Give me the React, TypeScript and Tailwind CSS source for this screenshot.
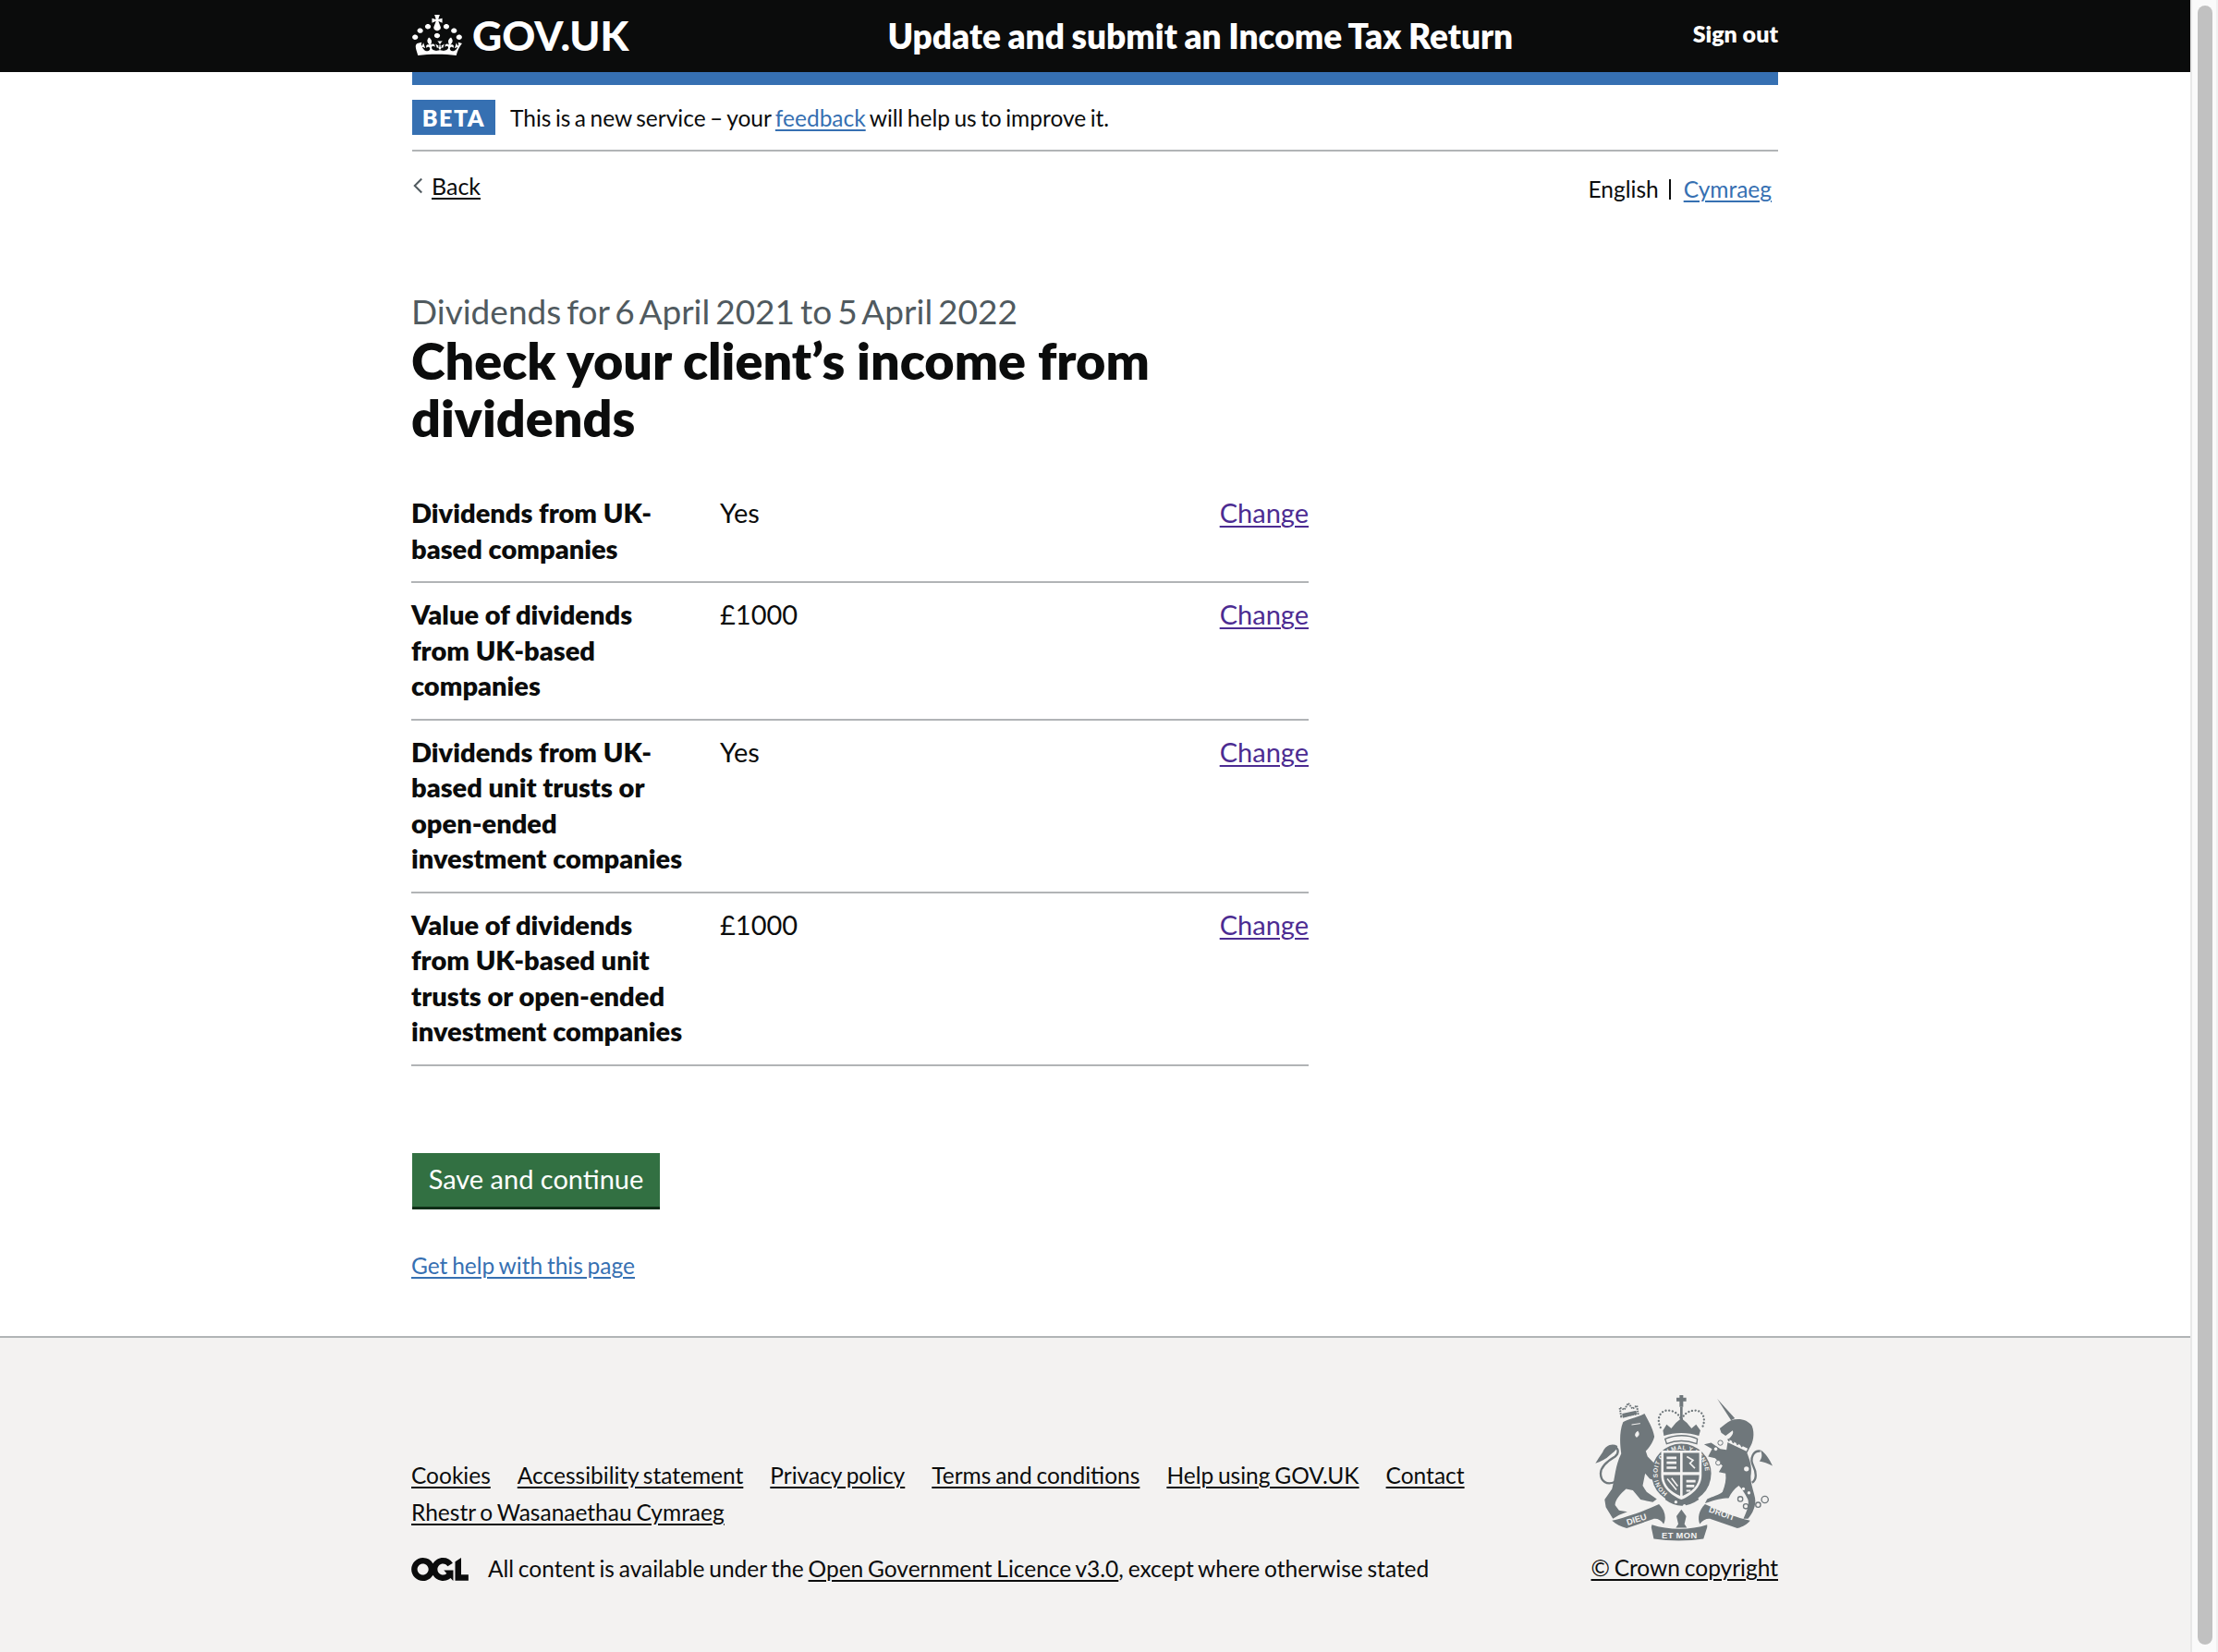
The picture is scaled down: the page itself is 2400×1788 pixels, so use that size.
import React from 'react';

const crownPath =
  'M22.6 10.4c-1 .4-2-.1-2.4-1-.4-.9.1-2 1-2.4.9-.4 2 .1 2.4 1s-.1 2-1 2.4m-5.9 6.7c-.9.4-2-.1-2.4-1-.4-.9.1-2 1-2.4.9-.4 2 .1 2.4 1s-.1 2-1 2.4m10.8-3.7c-1 .4-2-.1-2.4-1-.4-.9.1-2 1-2.4.9-.4 2 .1 2.4 1s0 2-1 2.4m3.3 4.8c-1 .4-2-.1-2.4-1-.4-.9.1-2 1-2.4.9-.4 2 .1 2.4 1s-.1 2-1 2.4M17 4.7l2.3 1.2V2.5l-2.3.7-.2-.2.9-3h-3.4l.9 3-.2.2c-.1.1-2.3-.7-2.3-.7v3.4L15 4.7c.1.1.1.2.2.2l-1.3 4c-.1.2-.1.4-.1.6 0 1.1.8 2 1.9 2.2h.7c1-.2 1.9-1.1 1.9-2.2 0-.2 0-.4-.1-.6l-1.3-4c-.1-.1.1-.2.1-.2m-7.6 5.7c.9.4 2-.1 2.4-1 .4-.9-.1-2-1-2.4-.9-.4-2 .1-2.4 1s0 2 1 2.4m-5 3c.9.4 2-.1 2.4-1 .4-.9-.1-2-1-2.4-.9-.4-2 .1-2.4 1s.1 2 1 2.4m-3.2 4.8c.9.4 2-.1 2.4-1 .4-1-.1-2-1-2.4-.9-.4-2 .1-2.4 1-.4 1 .1 2 1 2.4m14.8 11c4.4 0 8.6.3 12.3.8 1.1-4.5 2.4-7 3.7-8.8l-2.5-.9c.2 1.3.3 1.9 0 2.7-.4-.4-.8-1.1-1.1-2.3l-1.2 4c.7-.5 1.3-.8 2-.9-1.1 2.5-2.6 3.1-3.5 3-1.1-.2-1.7-1.2-1.5-2.1.3-1.2 1.5-1.5 2.1-.1 1.1-2.3-.8-3-2-2.3 1.9-1.9 2.1-3.5.6-5.6-2.1 1.6-2.1 3.2-1.2 5.5-1.2-1.4-3.2-.6-2.5 1.6.9-1.4 2.1-.5 1.9.8-.2 1.1-1.7 2.1-3.5 1.9-2.7-.2-2.9-2.1-2.9-3.6.7-.1 1.9.5 2.9 1.9l1-3.4c-1.1 1.2-2.2 1.4-3.3 1.4.4-1.2 2.1-3.4 2.1-3.4h-3.2s1.7 2.2 2.1 3.4c-1.1 0-2.2-.2-3.3-1.4l1 3.4c1-1.4 2.2-2 2.9-1.9 0 1.5-.2 3.4-2.9 3.6-1.9.2-3.4-.8-3.5-1.9-.2-1.3 1-2.2 1.9-.8.7-2.3-1.2-3-2.5-1.6.9-2.2.9-3.9-1.2-5.5-1.5 2-1.3 3.7.6 5.6-1.2-.7-3.1 0-2 2.3.6-1.4 1.8-1.1 2.1.1.2.9-.3 1.9-1.5 2.1-.9.2-2.4-.5-3.5-3 .6 0 1.2.3 2 .9l-1.2-4c-.3 1.1-.7 1.9-1.1 2.3-.3-.8-.2-1.4 0-2.7l-2.9.9C1.3 23 2.6 25.5 3.7 30c3.7-.5 7.9-.8 12.3-.8';

const oglPath =
  'M421.5 142.8V.1l-50.7 32.3v161.1h112.4v-50.7zm-122.3-9.6A47.12 47.12 0 0 1 221 97.8c0-26 21.1-47.1 47.1-47.1 16.7 0 31.4 8.7 39.7 21.8l42.7-27.2A97.63 97.63 0 0 0 268.1 0c-36.5 0-68.3 20.1-85.1 49.7A98 98 0 0 0 97.8 0C43.9 0 0 43.9 0 97.8s43.9 97.8 97.8 97.8c36.5 0 68.3-20.1 85.1-49.7a97.76 97.76 0 0 0 149.6 25.4l19.4 22.2h3v-87.8h-80l24.3 27.5zM97.8 145c-26 0-47.1-21.1-47.1-47.1s21.1-47.1 47.1-47.1 47.2 21 47.2 47S123.8 145 97.8 145';

const rows = [
  { key: ['Dividends from UK-', 'based companies'], value: 'Yes' },
  { key: ['Value of dividends', 'from UK-based', 'companies'], value: '£1000' },
  { key: ['Dividends from UK-', 'based unit trusts or', 'open-ended', 'investment companies'], value: 'Yes' },
  { key: ['Value of dividends', 'from UK-based unit', 'trusts or open-ended', 'investment companies'], value: '£1000' },
];

const footerLinks = [
  'Cookies',
  'Accessibility statement',
  'Privacy policy',
  'Terms and conditions',
  'Help using GOV.UK',
  'Contact',
  'Rhestr o Wasanaethau Cymraeg',
];

const Crest = () => (
  <svg viewBox="197 90 578 475" className="w-[192px] h-[158px] mr-[6px] text-[#6f777b]" fill="currentColor">
    {/* lion */}
    <path d="M288 178C300 168 330 165 358 150C368 170 385 195 390 225C385 245 372 262 362 272L368 290L400 322L408 345L392 368L375 362L360 345L352 385L365 405L398 428L385 438L365 434L345 430L320 400L298 395C280 410 262 430 262 448L275 465L302 470L275 480L255 492L232 455L228 430L252 395C262 360 262 320 282 280C278 250 275 210 288 178Z" />
    <path d="M316 186l28-4M336 208c-8 4-10 14-4 18 6-2 10-10 4-18z" fill="#f3f2f1" stroke="#f3f2f1" strokeWidth="3" />
    <path d="M262 372C235 385 215 370 215 345C215 320 245 300 262 290C275 280 275 262 258 256" fill="none" stroke="currentColor" strokeWidth="7" />
    <path d="M270 255C250 245 230 255 222 275C212 290 205 300 198 312C215 305 232 298 245 285C258 275 268 268 270 255Z" />
    {/* lion's crown */}
    <path d="M282 160L277 130L292 137L305 116L319 134L333 124L337 150Z" fill="none" stroke="currentColor" strokeWidth="6" strokeDasharray="5 3" />
    <path d="M285 150l46-10 2 12-46 12z" />
    {/* unicorn */}
    <path d="M595 102L652 165L640 172Z" />
    <path d="M640 172C665 163 695 170 708 190C718 215 712 245 700 262L692 278C700 300 708 320 705 345C700 370 712 395 718 425C722 450 710 475 695 492L680 492C690 470 700 450 695 430C685 410 675 395 665 385C650 395 640 410 632 425C610 425 590 430 555 442L562 428C580 420 600 415 612 405C620 385 625 365 622 345L600 340L612 320L588 295L565 290L578 265L552 250L575 245L605 265L625 268L630 235C640 225 650 215 645 205L622 222L608 212L603 198C615 190 625 180 640 172Z" />
    <path d="M624 236L692 268" fill="none" stroke="#f3f2f1" strokeWidth="10" />
    <path d="M630 232l4 8M644 238l4 8M658 244l4 8M672 251l4 8" stroke="currentColor" strokeWidth="5" />
    <circle cx="690" cy="330" r="8" fill="#f3f2f1" />
    <circle cx="680" cy="395" r="5" fill="#f3f2f1" />
    <circle cx="698" cy="408" r="5" fill="#f3f2f1" />
    <path d="M708 375C725 365 722 340 712 320C700 295 712 270 735 272" fill="none" stroke="currentColor" strokeWidth="7" />
    <path d="M735 268C755 280 765 300 775 320C760 312 745 308 732 305C742 295 742 280 735 268Z" />
    <circle cx="605" cy="245" r="8" fill="#f3f2f1" stroke="currentColor" strokeWidth="3" />
    <circle cx="590" cy="265" r="7" fill="#f3f2f1" stroke="currentColor" strokeWidth="3" />
    <circle cx="598" cy="310" r="8" fill="#f3f2f1" stroke="currentColor" strokeWidth="3" />
    <circle cx="670" cy="428" r="8" fill="none" stroke="currentColor" strokeWidth="4" />
    <circle cx="688" cy="452" r="8" fill="none" stroke="currentColor" strokeWidth="4" />
    <circle cx="728" cy="447" r="8" fill="none" stroke="currentColor" strokeWidth="4" />
    <circle cx="750" cy="430" r="11" fill="none" stroke="currentColor" strokeWidth="4" />
    {/* royal crown */}
    <path d="M472 90h12v8h10v12h-10v18h-12v-18h-10v-12h10z" />
    <path d="M474 128h8v42h-8z" />
    <path d="M410 195C395 165 410 135 440 140C460 143 472 155 478 170C484 155 496 143 516 140C546 135 561 165 546 195" fill="none" stroke="currentColor" strokeWidth="7" strokeLinecap="round" strokeDasharray="0.1 11" />
    <path d="M418 205L430 185L445 198L460 180L478 165L496 180L511 198L526 185L540 205L535 222C500 210 455 210 421 222Z" />
    <path d="M425 232C460 218 500 218 530 232L528 248C495 236 460 236 430 248Z" fill="none" stroke="currentColor" strokeWidth="4" />
    {/* garter and shield */}
    <circle cx="478" cy="345" r="97" />
    <path id="garter" d="M433 409A78 78 0 1 1 523 409" fill="none" />
    <text fill="#f3f2f1" fontFamily="'Liberation Sans', sans-serif" fontSize="20" fontWeight="700" letterSpacing="1.5">
      <textPath href="#garter">HONI SOIT QUI MAL Y PENSE</textPath>
    </text>
    <path d="M412 270H544V350C544 390 512 416 478 430C444 416 412 390 412 350Z" fill="#f3f2f1" />
    <path d="M420 278H474V340H420zM482 278H536V340H482zM420 350H474V418C444 405 420 385 420 350zM482 350H536C536 385 512 405 482 418z" />
    <path d="M430 290h32v8h-32zM430 306h32v8h-32zM430 322h32v8h-32zM494 366h30v8h-30zM494 382h26v8h-26zM494 398h14v6h-14z" fill="#f3f2f1" />
    <path d="M496 290l20 12-10 10 16 16M432 362l30 36M446 360l20 26" fill="none" stroke="#f3f2f1" strokeWidth="5" />
    {/* motto */}
    <path d="M425 430Q478 470 535 430L528 418Q478 450 432 418Z" />
    <circle cx="460" cy="438" r="5" fill="#f3f2f1" />
    <circle cx="488" cy="450" r="5" fill="#f3f2f1" />
    <path d="M252 498C290 490 350 470 405 445C425 465 430 490 420 510C412 495 395 490 385 494L300 523C280 518 265 510 252 498Z" />
    <path d="M702 498C660 490 610 470 555 445C535 465 530 490 538 510C548 495 565 490 575 494L660 523C680 518 692 510 702 498Z" />
    <path d="M382 512C434 530 510 530 562 512L562 520L550 558C500 566 440 566 388 558L380 520Z" />
    <path d="M478 462L494 484L488 510L496 522H460L468 510L462 484Z" />
    <g fill="#f3f2f1" fontFamily="'Liberation Sans', sans-serif" fontSize="28" fontWeight="700">
      <text x="303" y="514" transform="rotate(-18 303 514)">DIEU</text>
      <text x="414" y="555" letterSpacing="1.5">ET MON</text>
      <text x="566" y="470" transform="rotate(19 566 470)">DROIT</text>
    </g>
  </svg>
);

export default function App() {
  return (
    <div className="flex w-full h-[1788px] bg-white text-[#0b0c0c] font-['Lato',sans-serif] text-[29px] leading-[38.5px] overflow-hidden">
      <div className="flex-1 flex flex-col min-w-0">
        <header className="bg-[#0b0c0c] h-[78px] shrink-0">
          <div className="w-[1478px] mx-auto h-full flex items-center justify-between text-white pb-[2px]">
            <div className="w-[236px] flex items-center gap-[11px]">
              <svg viewBox="0 0 32 30" preserveAspectRatio="none" className="w-[54px] h-[44px]" fill="currentColor">
                <path d={crownPath} />
              </svg>
              <span className="text-[44.5px] font-black leading-none">GOV.UK</span>
            </div>
            <div className="text-[37px] font-extrabold leading-none ml-[84px] [word-spacing:-1px]">Update and submit an Income Tax Return</div>
            <a className="text-[25px] font-extrabold leading-none mb-[3px]">Sign out</a>
          </div>
        </header>

        <main className="w-[1478px] mx-auto flex-1">
          <div className="h-[14px] bg-[#3670b2]" />
          <div className="flex items-center gap-[16px] pt-[16px] pb-[16px] border-b-2 border-[#b1b4b6] h-[72px]">
            <strong className="bg-[#3670b2] text-white text-[25px] font-extrabold tracking-[1.5px] h-[38px] w-[90px] flex items-center justify-center leading-none">
              BETA
            </strong>
            <p className="text-[24.5px] leading-[38px] pt-[2px] [word-spacing:-1.8px]">
              This is a new service – your <a className="text-[#3670b2] underline decoration-2 underline-offset-[3px]">feedback</a> will help us to improve it.
            </p>
          </div>

          <div className="flex justify-between items-start">
            <a className="mt-[18px] flex items-center gap-[8px] text-[25px] leading-[38px]">
              <svg viewBox="0 0 10 16" className="w-[13px] h-[20px] text-[#505a5f]" fill="none" stroke="currentColor" strokeWidth="1.6">
                <path d="M8 2L2 8l6 6" />
              </svg>
              <span className="underline decoration-2 underline-offset-[3px]">Back</span>
            </a>
            <div className="mt-[22px] mr-[7px] flex items-center text-[24.5px] leading-[38px]">
              <span>English</span>
              <span className="w-[2px] h-[22px] bg-[#0b0c0c] mx-[11px]" />
              <a className="text-[#3670b2] underline decoration-2 underline-offset-[3px] ml-[3px]">Cymraeg</a>
            </div>
          </div>

          <div className="text-[37px] leading-[46px] text-[#505a5f] mt-[90px] -ml-[1px] [word-spacing:-3.5px]">Dividends for 6 April 2021 to 5 April 2022</div>
          <h1 className="text-[55.7px] leading-[61.5px] font-extrabold w-[971px] -ml-[1px] -mt-[1px]">
            Check your client’s income from
            <br />
            dividends
          </h1>

          <dl className="w-[971px] mt-[39px] -ml-[1px]">
            {rows.map((row, i) => (
              <div key={i} className="grid grid-cols-[334px_1fr_auto] pb-[16px] pt-[15px] border-b-2 border-[#b1b4b6]">
                <dt className="font-extrabold">
                  {row.key.map((line) => (
                    <div key={line}>{line}</div>
                  ))}
                </dt>
                <dd>{row.value}</dd>
                <dd>
                  <a className="text-[#4c2c92] underline decoration-2 underline-offset-[3px]">Change</a>
                </dd>
              </div>
            ))}
          </dl>

          <button className="block mt-[94px] h-[61px] w-[268px] pb-[2px] bg-[#327042] border-b-[3px] border-[#0f2e17] text-white text-[29px] leading-none">
            Save and continue
          </button>

          <a className="block mt-[46px] -ml-[1px] text-[24.5px] leading-[30px] text-[#3670b2] underline decoration-2 underline-offset-[3px] [word-spacing:-1.5px]">Get help with this page</a>
        </main>

        <footer className="bg-[#f3f2f1] border-t-2 border-[#b1b4b6] h-[342px] shrink-0">
          <div className="w-[1478px] mx-auto flex justify-between items-start pt-[62px] text-[24.5px] leading-[32px] [word-spacing:-1.5px]">
            <div className="mt-[71px] -ml-[1px]">
              <ul className="flex flex-wrap gap-x-[29px] gap-y-[8px] w-[1160px]">
                {footerLinks.map((link) => (
                  <li key={link}>
                    <a className="underline decoration-2 underline-offset-[3px]">{link}</a>
                  </li>
                ))}
              </ul>
              <div className="flex items-center gap-[21px] mt-[29px]">
                <svg viewBox="0 0 483.2 195.7" className="w-[62px] h-[25px]" fill="currentColor">
                  <path d={oglPath} />
                </svg>
                <span>
                  All content is available under the <a className="underline decoration-2 underline-offset-[3px]">Open Government Licence v3.0</a>, except where otherwise stated
                </span>
              </div>
            </div>
            <div className="flex flex-col items-end">
              <Crest />
              <a className="underline decoration-2 underline-offset-[3px] mt-[13px]">© Crown copyright</a>
            </div>
          </div>
        </footer>
      </div>

      <div className="w-[30px] shrink-0 bg-[#fafafa] border-l-2 border-l-[#e8e8e8] border-r-2 border-r-[#f0f0f0] pl-[6px] pt-[6px] pb-[8px]">
        <div className="h-full w-[16px] rounded-full bg-[#c1c1c1]" />
      </div>
    </div>
  );
}
